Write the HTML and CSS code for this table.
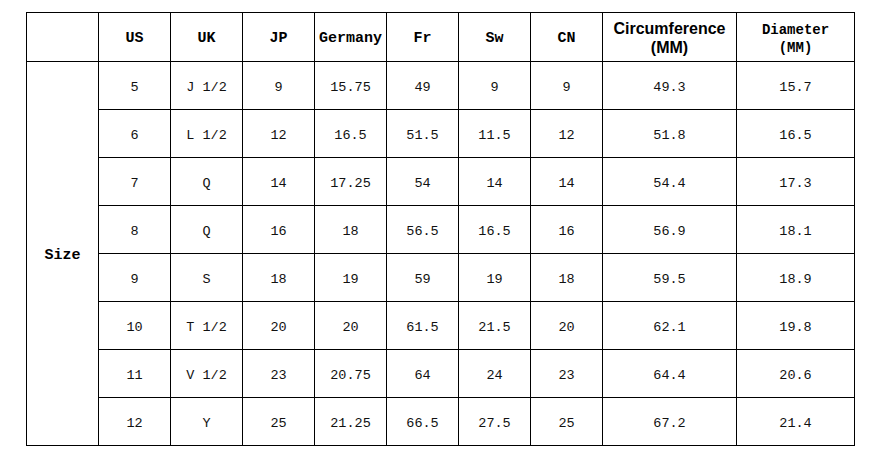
FILE: index.html
```html
<!DOCTYPE html>
<html>
<head>
<meta charset="utf-8">
<link rel="stylesheet" href="styles.css">
</head>
<body>
<div class="wrap">
<table class="size-table">
  <colgroup>
    <col class="c72"><col class="c72"><col class="c72"><col class="c72"><col class="c72"><col class="c72"><col class="c72"><col class="c72"><col class="c134"><col class="c118">
  </colgroup>
  <thead>
    <tr>
      <th></th>
      <th>US</th>
      <th>UK</th>
      <th>JP</th>
      <th>Germany</th>
      <th>Fr</th>
      <th>Sw</th>
      <th>CN</th>
      <th class="sans">Circumference<br>(MM)</th>
      <th class="dia">Diameter<br>(MM)</th>
    </tr>
  </thead>
  <tbody>
    <tr><th class="size" rowspan="8">Size</th><td>5</td><td>J 1/2</td><td>9</td><td>15.75</td><td>49</td><td>9</td><td>9</td><td>49.3</td><td>15.7</td></tr>
    <tr><td>6</td><td>L 1/2</td><td>12</td><td>16.5</td><td>51.5</td><td>11.5</td><td>12</td><td>51.8</td><td>16.5</td></tr>
    <tr><td>7</td><td>Q</td><td>14</td><td>17.25</td><td>54</td><td>14</td><td>14</td><td>54.4</td><td>17.3</td></tr>
    <tr><td>8</td><td>Q</td><td>16</td><td>18</td><td>56.5</td><td>16.5</td><td>16</td><td>56.9</td><td>18.1</td></tr>
    <tr><td>9</td><td>S</td><td>18</td><td>19</td><td>59</td><td>19</td><td>18</td><td>59.5</td><td>18.9</td></tr>
    <tr><td>10</td><td>T 1/2</td><td>20</td><td>20</td><td>61.5</td><td>21.5</td><td>20</td><td>62.1</td><td>19.8</td></tr>
    <tr><td>11</td><td>V 1/2</td><td>23</td><td>20.75</td><td>64</td><td>24</td><td>23</td><td>64.4</td><td>20.6</td></tr>
    <tr><td>12</td><td>Y</td><td>25</td><td>21.25</td><td>66.5</td><td>27.5</td><td>25</td><td>67.2</td><td>21.4</td></tr>
  </tbody>
</table>
</div>
</body>
</html>
```
FILE: styles.css
```css
html, body {
  margin: 0;
  padding: 0;
  background: #fff;
}
.wrap {
  padding: 12px 0 0 26px;
}
.size-table {
  border-collapse: separate;
  border-spacing: 0;
  table-layout: fixed;
  width: 829px;
  border-top: 1px solid #000;
  border-left: 1px solid #000;
  font-family: "Liberation Mono", "DejaVu Sans Mono", monospace;
  font-size: 13.5px;
  color: #111;
}
.c72 { width: 72px; }
.c134 { width: 134px; }
.c118 { width: 118px; }
.size-table th,
.size-table td {
  box-sizing: border-box;
  border-right: 1px solid #000;
  border-bottom: 1px solid #000;
  padding: 0;
  text-align: center;
  vertical-align: middle;
}
.size-table thead th {
  height: 49px;
  padding-top: 3px;
  font-weight: bold;
  font-size: 15px;
  color: #000;
}
.size-table thead th.sans {
  font-family: "Liberation Sans", Arial, sans-serif;
  font-size: 16px;
  line-height: 19px;
  padding-top: 2px;
}
.size-table thead th.dia {
  font-size: 14px;
  line-height: 18px;
  padding-top: 3px;
}
.size-table td {
  height: 48px;
  padding-top: 4px;
}
.size-table th.size {
  padding-top: 4px;
  font-weight: bold;
  font-size: 15px;
  color: #000;
}
```
